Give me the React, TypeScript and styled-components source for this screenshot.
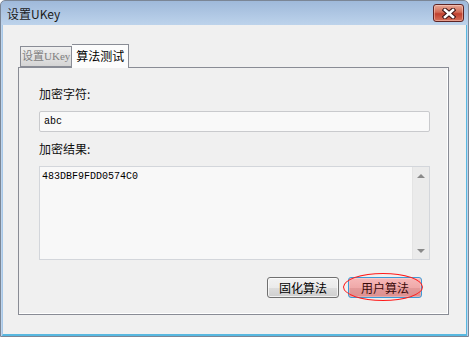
import * as React from 'react';
import styled, { createGlobalStyle } from 'styled-components';

const GlobalStyle = createGlobalStyle`
  html, body {
    margin: 0;
    padding: 0;
    background: #ffffff;
  }
  body {
    font-family: "Noto Sans CJK SC", "Noto Sans", sans-serif;
  }
`;

const Window = styled.div`
  width: 469px;
  height: 337px;
  box-sizing: border-box;
  display: flex;
  flex-direction: column;
  background: linear-gradient(#9fb9da, #bed4ec 25px, #bed4ec);
  border: 1px solid #7b8696;
  border-radius: 5px 5px 0 0;
  overflow: hidden;
`;

const TitleBar = styled.div`
  height: 24px;
  display: flex;
  align-items: center;
  justify-content: space-between;
  padding: 0 4px 0 6px;
  flex-shrink: 0;
`;

const Title = styled.div`
  font-size: 12px;
  color: #1a1a1a;
  line-height: 16px;
  padding-top: 1px;
`;

const CloseButton = styled.div`
  width: 29px;
  height: 16px;
  margin-top: 0;
  border: 1px solid #5e2424;
  border-radius: 3px;
  background: linear-gradient(#e7a896, #d26b56 45%, #c0402e 55%, #d6705a);
  display: flex;
  align-items: center;
  justify-content: center;
  box-shadow: inset 0 0 0 1px rgba(255, 220, 210, 0.45);
`;

const Client = styled.div`
  flex: 1;
  margin: 0 1px 0 1px;
  border-left: 1px solid #a7c8e8;
  border-right: 1px solid #58b8e0;
  border-bottom: 2px solid #58b8e0;
  background: #f0f0f0;
  padding: 19px 17px 19px 15px;
  display: flex;
  flex-direction: column;
`;

const TabRow = styled.div`
  display: flex;
  align-items: flex-end;
  padding-left: 2px;
  height: 23px;
  position: relative;
  z-index: 1;
`;

const Tab = styled.div<{ $active?: boolean }>`
  box-sizing: border-box;
  height: ${(p) => (p.$active ? '24px' : '21px')};
  margin-bottom: ${(p) => (p.$active ? '-1px' : '0')};
  padding: 0 ${(p) => (p.$active ? '4px' : '1px')};
  border: 1px solid #898c95;
  border-bottom: ${(p) => (p.$active ? 'none' : '1px solid #898c95')};
  border-left: ${(p) => (p.$active ? 'none' : '1px solid #898c95')};
  background: ${(p) =>
    p.$active ? '#fcfcfc' : 'linear-gradient(#f0f0f0, #e3e3e3 50%, #d4d4d4)'};
  color: ${(p) => (p.$active ? '#000000' : '#808080')};
  font-family: ${(p) =>
    p.$active
      ? '"Noto Sans CJK SC", sans-serif'
      : '"Liberation Serif", "Noto Sans CJK SC", serif'};
  font-size: ${(p) => (p.$active ? '12px' : '11px')};
  line-height: ${(p) => (p.$active ? '21px' : '19px')};
  white-space: nowrap;
`;

const Panel = styled.div`
  flex: 1;
  border: 1px solid #898c95;
  box-shadow: inset -1px -1px 0 #ffffff;
  padding: 18px 18px 16px 20px;
  display: flex;
  flex-direction: column;
`;

const Label = styled.div`
  font-size: 12px;
  line-height: 16px;
  height: 16px;
  color: #111111;
`;

const InputBox = styled.div`
  box-sizing: border-box;
  height: 21px;
  margin: 9px 0;
  border: 1px solid #c9cacd;
  border-radius: 2px;
  background: #f9f9f9;
  padding: 0 4px;
  font-family: "Liberation Mono", monospace;
  font-size: 10px;
  line-height: 19px;
  color: #000000;
`;

const ResultBox = styled.div`
  box-sizing: border-box;
  height: 94px;
  margin-top: 9px;
  border: 1px solid #d3d6db;
  background: #f8f8f8;
  display: flex;
`;

const ResultText = styled.div`
  flex: 1;
  padding: 4px 2px;
  font-family: "Liberation Mono", monospace;
  font-size: 10px;
  line-height: 12px;
  color: #000000;
`;

const ScrollBar = styled.div`
  width: 16px;
  background: #ebebeb;
  border-left: 1px solid #e4e4e4;
  display: flex;
  flex-direction: column;
  justify-content: space-between;
  align-items: center;
  padding: 7px 0 6px;
`;

const Arrow = styled.div<{ $down?: boolean }>`
  width: 0;
  height: 0;
  border-left: 4px solid transparent;
  border-right: 4px solid transparent;
  ${(p) =>
    p.$down ? 'border-top: 4px solid #8a8a8a;' : 'border-bottom: 4px solid #8a8a8a;'}
`;

const ButtonRow = styled.div`
  display: flex;
  justify-content: flex-end;
  gap: 9px;
  margin-top: 17px;
  padding-right: 8px;
`;

const Button = styled.div<{ $focused?: boolean }>`
  position: relative;
  box-sizing: border-box;
  width: ${(p) => (p.$focused ? '74px' : '72px')};
  height: 21px;
  border: 1px solid ${(p) => (p.$focused ? '#3c9ad6' : '#707070')};
  border-radius: 3px;
  background: ${(p) =>
    p.$focused
      ? 'linear-gradient(#f6b9b9, #f0a9a9 50%, #e49a9a 51%, #dd9090)'
      : 'linear-gradient(#f2f2f2, #ebebeb 50%, #dddddd 51%, #cfcfcf)'};
  box-shadow: inset 0 0 0 1px ${(p) => (p.$focused ? 'rgba(255,255,255,0.25)' : 'rgba(255,255,255,0.7)')};
  color: ${(p) => (p.$focused ? '#3a0a0a' : '#000000')};
  font-size: 12px;
  line-height: 19px;
  text-align: center;
`;

const Highlight = styled.div`
  position: absolute;
  left: -6px;
  top: -5px;
  width: 80px;
  height: 28px;
  box-sizing: border-box;
  border: 1px solid #ff1a1a;
  border-radius: 50%;
  pointer-events: none;
`;

export default function App() {
  return (
    <>
      <GlobalStyle />
      <Window>
        <TitleBar>
          <Title>设置UKey</Title>
          <CloseButton>
            <svg width="14" height="11" viewBox="0 0 14 11">
              <path d="M3 2 L11 9 M11 2 L3 9" stroke="#3d1414" strokeWidth="4.6" strokeLinecap="square" />
              <path d="M3 2 L11 9 M11 2 L3 9" stroke="#ffffff" strokeWidth="2.6" strokeLinecap="square" />
            </svg>
          </CloseButton>
        </TitleBar>
        <Client>
          <TabRow>
            <Tab>设置UKey</Tab>
            <Tab $active>算法测试</Tab>
          </TabRow>
          <Panel>
            <Label>加密字符:</Label>
            <InputBox>abc</InputBox>
            <Label>加密结果:</Label>
            <ResultBox>
              <ResultText>483DBF9FDD0574C0</ResultText>
              <ScrollBar>
                <Arrow />
                <Arrow $down />
              </ScrollBar>
            </ResultBox>
            <ButtonRow>
              <Button>固化算法</Button>
              <Button $focused>
                用户算法
                <Highlight />
              </Button>
            </ButtonRow>
          </Panel>
        </Client>
      </Window>
    </>
  );
}
